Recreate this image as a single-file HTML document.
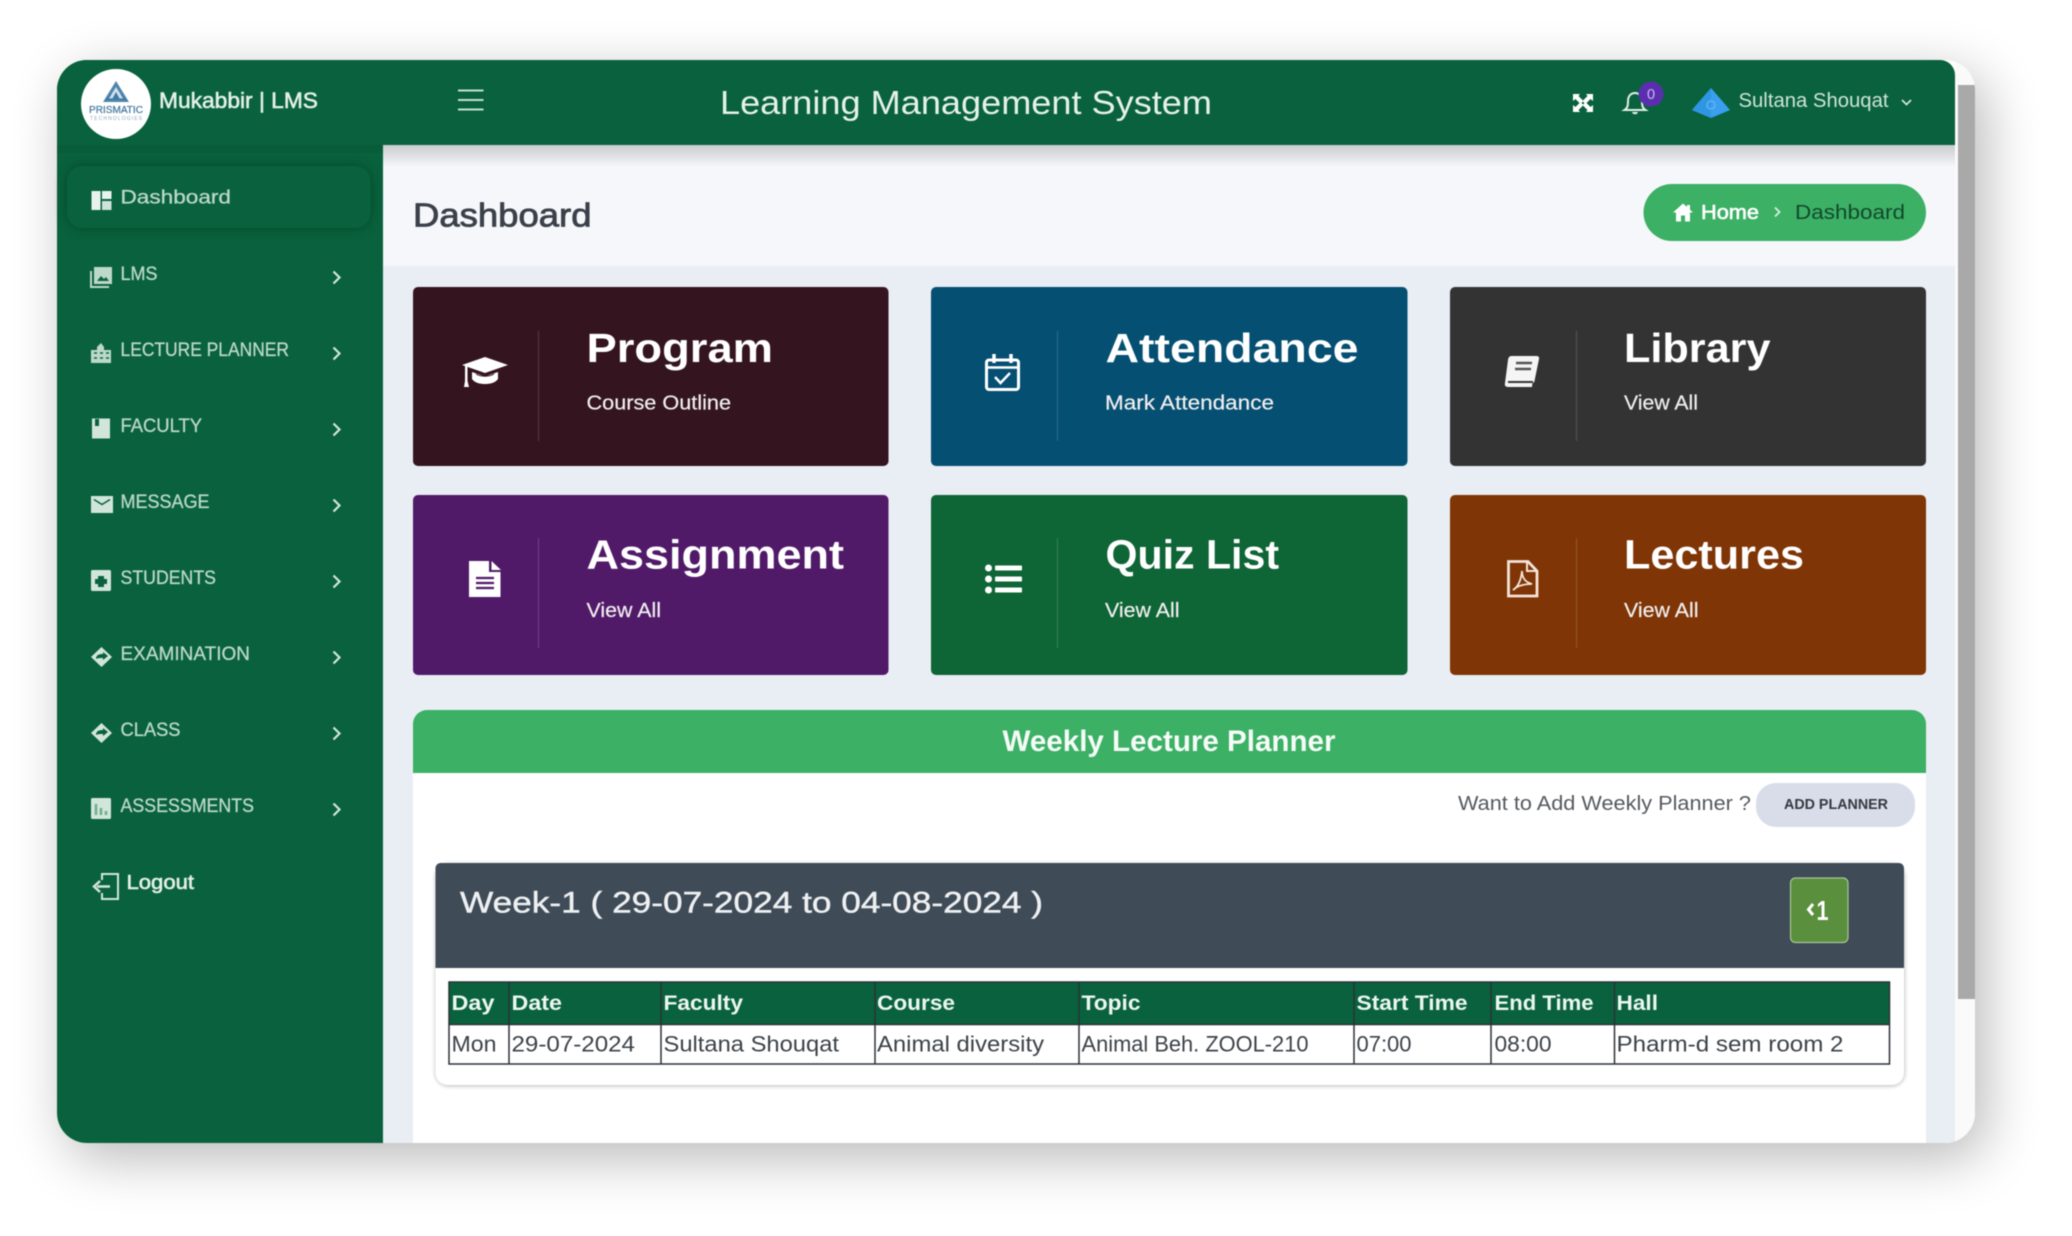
<!DOCTYPE html>
<html lang="en"><head><meta charset="utf-8"><title>Learning Management System</title>
<style>
html,body{margin:0;padding:0;background:#fff;width:2072px;height:1236px;overflow:hidden}
svg{display:block;filter:blur(.6px)}
text{font-family:"Liberation Sans",Arial,sans-serif;white-space:pre}
.m{stroke-width:.6}
</style></head><body>
<svg width="2072" height="1236" viewBox="0 0 2072 1236" xmlns="http://www.w3.org/2000/svg">
<defs>
<filter id="sh" x="-10%" y="-20%" width="120%" height="140%"><feGaussianBlur stdDeviation="28"/></filter>
<filter id="s6" x="-20%" y="-60%" width="140%" height="220%"><feGaussianBlur stdDeviation="6"/></filter>
<filter id="s2" x="-5%" y="-10%" width="110%" height="120%"><feGaussianBlur stdDeviation="2"/></filter>
<linearGradient id="hs" x1="0" y1="0" x2="0" y2="1"><stop offset="0" stop-color="#c9ccd0"/><stop offset="1" stop-color="#f5f7fa"/></linearGradient>
<clipPath id="win"><rect x="57" y="60" width="1918" height="1083" rx="30"/></clipPath>
<clipPath id="logo"><circle cx="116" cy="104" r="35"/></clipPath>
</defs>
<rect width="2072" height="1236" fill="#fff"/>
<rect x="67" y="75" width="1918" height="1083" rx="30" fill="#000" opacity=".28" filter="url(#sh)"/>
<g clip-path="url(#win)">
<rect x="57" y="60" width="1918" height="1083" fill="#fff"/>
<!-- scrollbar -->
<rect x="1955" y="60" width="20" height="1083" fill="#fafafa"/>
<rect x="1958" y="85" width="17" height="914" fill="#a9a9a9"/>
<!-- content bg -->
<rect x="383" y="145" width="1572" height="998" fill="#e9edf4" />
<rect x="383" y="145" width="1572" height="121" fill="#f5f7fa"/>
<rect x="383" y="145" width="1572" height="22" fill="url(#hs)"/>
<!-- sidebar -->
<rect x="57" y="60" width="326" height="1083" fill="#09623d"/>
<rect x="57" y="145" width="326" height="8" fill="#075535" opacity=".5"/>
<!-- header -->
<path d="M57 60H1940a15 15 0 0 1 15 15V145H57Z" fill="#09623d"/>
</g>
<!-- logo -->
<circle cx="116" cy="104" r="35" fill="#fff"/>
<g clip-path="url(#logo)">
<path d="M116 81l13 21h-26Z" fill="#4f86ad"/>
<path d="M116 87l7.500 12h-15Z" fill="#cfe0ea"/>
<path d="M116 92l3.500 6.500h-7Z" fill="#3f7aa5"/>
<path d="M106 101l5-7M126 101l-5-7M108 99h16" stroke="#3f7aa5" stroke-width="1.200" fill="none"/>
<text x="89" y="113" font-size="10" fill="#4f7fa3" stroke="#4f7fa3" stroke-width=".3" textLength="54" lengthAdjust="spacingAndGlyphs">PRISMATIC</text>
<text x="90" y="120" font-size="5" fill="#8aa8bc" textLength="52" lengthAdjust="spacing">TECHNOLOGIES</text>
</g>
<text x="159" y="108" font-size="22.500" fill="#e3efe8" stroke="#e3efe8" class="m" textLength="159" lengthAdjust="spacingAndGlyphs">Mukabbir | LMS</text>
<!-- hamburger -->
<path d="M458 90.500H483.500M458 100H483.500M458 109.500H483.500" stroke="#c4ddcf" stroke-width="2" fill="none"/>
<text x="720" y="114" font-size="33" fill="#e6f1ea" textLength="492" lengthAdjust="spacingAndGlyphs">Learning Management System</text>
<!-- fullscreen -->
<g fill="#fff"><path d="M1573 94h7l-1.500 2 5 5-3 3-5-5-2.500 2Z"/><path d="M1593 94h-7l1.500 2-5 5 3 3 5-5 2.500 2Z"/><path d="M1573 112h7l-1.500-2 5-5-3-3-5 5-2.500-2Z"/><path d="M1593 112h-7l1.500-2-5-5 3-3 5 5 2.500-2Z"/></g>
<!-- bell -->
<path d="M1624.500 110c3-2 3.500-4 3.500-9 0-5 3-8 7-8s7 3 7 8c0 5 .5 7 3.500 9Z" fill="none" stroke="#e3efe8" stroke-width="2"/>
<path d="M1632 112c.5 3 5.500 3 6 0Z" fill="#e3efe8"/>
<circle cx="1651" cy="94" r="12.500" fill="#5b2eb0"/>
<text x="1651" y="99" font-size="14.500" fill="#cdbcf0" text-anchor="middle">0</text>
<!-- avatar -->
<path d="M1711 88L1730 110L1711 118L1692 110Z" fill="#3a9fee"/>
<path d="M1711 88L1692 110L1711 118Z" fill="#2f96e4"/>
<circle cx="1711" cy="105" r="4" fill="none" stroke="#5db4f3" stroke-width="1.500"/>
<text x="1738.500" y="107" font-size="20" fill="#cfe3d8" textLength="150" lengthAdjust="spacingAndGlyphs">Sultana Shouqat</text>
<path d="M1902 100l4.500 4.500 4.500-4.500" fill="none" stroke="#cfe3d8" stroke-width="1.800"/>
<!-- page title -->
<text x="413" y="226.500" font-size="33" fill="#3b404a" stroke="#3b404a" stroke-width=".8" textLength="178.500" lengthAdjust="spacingAndGlyphs">Dashboard</text>
<rect x="1643.500" y="184" width="282.500" height="57" rx="28.500" fill="#3cb065"/>
<path d="M1683 203.500l-10 9h3v9h5v-6h4v6h5v-9h3l-3-2.700V205h-3v2Z" fill="#fff"/>
<text x="1701" y="219" font-size="20.500" fill="#fff" stroke="#fff" class="m" textLength="58" lengthAdjust="spacingAndGlyphs">Home</text>
<path d="M1775 207.500l4.500 4.500-4.500 4.500" fill="none" stroke="#d5f0df" stroke-width="1.800"/>
<text x="1795" y="219" font-size="20.500" fill="#11492b" textLength="110" lengthAdjust="spacingAndGlyphs">Dashboard</text>

<!-- sidebar active -->
<rect x="67" y="166" width="303.500" height="62" rx="15" fill="#03301c" opacity=".6" filter="url(#s6)"/>
<rect x="67" y="166" width="303.500" height="62" rx="15" fill="#09623d"/>
<g fill="#e9f3ee"><rect x="91.500" y="191" width="9" height="19"/><rect x="102" y="191" width="9.500" height="8"/><rect x="102" y="201" width="9.500" height="9" fill="#cfe3d8"/></g>
<g font-size="19.500" fill="#bcd8c9" stroke="#bcd8c9" stroke-width=".3">
<text x="120.500" y="203.500" textLength="110.500" lengthAdjust="spacingAndGlyphs">Dashboard</text>
<text x="120.500" y="280" textLength="37" lengthAdjust="spacingAndGlyphs">LMS</text>
<text x="120.500" y="356" textLength="168.500" lengthAdjust="spacingAndGlyphs">LECTURE PLANNER</text>
<text x="120.500" y="432" textLength="81.500" lengthAdjust="spacingAndGlyphs">FACULTY</text>
<text x="120.500" y="508" textLength="89" lengthAdjust="spacingAndGlyphs">MESSAGE</text>
<text x="120.500" y="584" textLength="95.500" lengthAdjust="spacingAndGlyphs">STUDENTS</text>
<text x="120.500" y="660" textLength="129.500" lengthAdjust="spacingAndGlyphs">EXAMINATION</text>
<text x="120.500" y="736" textLength="60" lengthAdjust="spacingAndGlyphs">CLASS</text>
<text x="120.500" y="812" textLength="133.500" lengthAdjust="spacingAndGlyphs">ASSESSMENTS</text>
</g>
<!-- LMS -->
<g><path d="M91 271v16h18" fill="none" stroke="#bcd8c9" stroke-width="2"/><rect x="94" y="267" width="18" height="17" fill="#bcd8c9"/><path d="M97 281l4-5 3 3 2-2 3 4Z" fill="#09623d"/></g>
<!-- lecture planner -->
<path d="M91 350h6v-3l4-4 3 4v3h7v13H91Z" fill="#bcd8c9"/><path d="M94 353h3M100 353h3M106 353h3M94 358h3M100 358h3M106 358h3" stroke="#09623d" stroke-width="1.500"/>
<!-- faculty -->
<rect x="92" y="418.500" width="18" height="20" fill="#d2e5da"/><rect x="95" y="419" width="4" height="7" fill="#09623d"/>
<!-- message -->
<rect x="91" y="496" width="22" height="17" fill="#d2e5da"/><path d="M94 499.500l8 5 8-5" fill="none" stroke="#09623d" stroke-width="1.500"/>
<!-- students -->
<rect x="91" y="570" width="20" height="21" rx="1.500" fill="#d2e5da"/><path d="M95 579h3v-3h6v3h3v5h-3v3h-6v-3h-3Z" fill="#09623d"/>
<!-- examination -->
<path d="M101.500 647l10.500 10-10.500 10-10.500-10Z" fill="#d2e5da"/><path d="M96 659c0-4 3-5 7-5v-2l5 4-5 4v-2c-3 0-5 0-7 1Z" fill="#09623d"/>
<!-- class -->
<path d="M101.500 723l10.500 10-10.500 10-10.500-10Z" fill="#d2e5da"/><path d="M96 735c0-4 3-5 7-5v-2l5 4-5 4v-2c-3 0-5 0-7 1Z" fill="#09623d"/>
<!-- assessments -->
<rect x="91" y="798" width="20" height="21" rx="1.500" fill="#d2e5da"/><path d="M96 804v11M101 808v7M106 811v4" stroke="#6fae8b" stroke-width="2.500"/>
<!-- logout -->
<path d="M102 880v-6h16v25h-16v-6" fill="none" stroke="#d2e5da" stroke-width="2"/><path d="M110 886.500H97M100 881l-6 5.500 6 5.500" fill="none" stroke="#d2e5da" stroke-width="2.500"/>
<text x="126.500" y="889" font-size="20.500" fill="#e3efe8" stroke="#e3efe8" class="m" textLength="67.500" lengthAdjust="spacingAndGlyphs">Logout</text>
<!-- chevrons -->
<g fill="none" stroke="#d2e5da" stroke-width="2.200"><path d="M333.500 271.500l6 6-6 6"/><path d="M333.500 347.500l6 6-6 6"/><path d="M333.500 423.500l6 6-6 6"/><path d="M333.500 499.500l6 6-6 6"/><path d="M333.500 575.500l6 6-6 6"/><path d="M333.500 651.500l6 6-6 6"/><path d="M333.500 727.500l6 6-6 6"/><path d="M333.500 803.500l6 6-6 6"/></g>

<!-- cards -->
<g>
<rect x="413" y="287" width="475.500" height="179" rx="5" fill="#34141f"/>
<rect x="931" y="287" width="476.500" height="179" rx="5" fill="#054f72"/>
<rect x="1450" y="287" width="476" height="179" rx="5" fill="#333333"/>
<rect x="413" y="495" width="475.500" height="180" rx="5" fill="#511a69"/>
<rect x="931" y="495" width="476.500" height="180" rx="5" fill="#0e6535"/>
<rect x="1450" y="495" width="476" height="180" rx="5" fill="#7f3505"/>
</g>
<g stroke="#fff" stroke-opacity=".15" stroke-width="1.200">
<path d="M538.500 331V441M1057.500 331V441M1576.500 331V441M538.500 538V648M1057.500 538V648M1576.500 538V648"/>
</g>
<g fill="#fff" font-size="41" font-weight="bold">
<text x="586.500" y="362" textLength="186.500" lengthAdjust="spacingAndGlyphs">Program</text>
<text x="1105.500" y="362" textLength="253" lengthAdjust="spacingAndGlyphs">Attendance</text>
<text x="1624" y="362" textLength="146.500" lengthAdjust="spacingAndGlyphs">Library</text>
<text x="586.500" y="568.500" textLength="257.500" lengthAdjust="spacingAndGlyphs">Assignment</text>
<text x="1105.500" y="568.500" textLength="173.500" lengthAdjust="spacingAndGlyphs">Quiz List</text>
<text x="1624" y="568.500" textLength="180" lengthAdjust="spacingAndGlyphs">Lectures</text>
</g>
<g font-size="20" fill="#f0eff0" stroke="#f0eff0" stroke-width=".2">
<text x="586.500" y="409.500" textLength="144.500" lengthAdjust="spacingAndGlyphs">Course Outline</text>
<text x="1105" y="409.500" textLength="169" lengthAdjust="spacingAndGlyphs">Mark Attendance</text>
<text x="1624" y="409.500" textLength="74" lengthAdjust="spacingAndGlyphs">View All</text>
<text x="586.500" y="617" textLength="74.500" lengthAdjust="spacingAndGlyphs">View All</text>
<text x="1105" y="617" textLength="74.500" lengthAdjust="spacingAndGlyphs">View All</text>
<text x="1624" y="617" textLength="74.500" lengthAdjust="spacingAndGlyphs">View All</text>
</g>
<!-- cap icon -->
<g fill="#fff"><path d="M485 357l23 8-23 8-23-8Z"/><path d="M472 372l13 4.500 13-4.500v7c-3 4-8 5-13 5s-10-1-13-5Z"/><path d="M465 366h2.500v15l1.500 6h-5l1-6Z"/></g>
<path d="M476 374c5 3 13 3 18 0" stroke="#34141f" stroke-width="1" fill="none"/>
<!-- calendar -->
<g fill="none" stroke="#fff" stroke-width="3"><rect x="986.500" y="360" width="32" height="29.500" rx="2.500"/><path d="M994 354v9M1011 354v9" stroke-width="3.500"/><path d="M986.500 367.500h32" stroke-width="2.500"/><path d="M995 377l5.500 6 9.500-10" stroke-width="2.500"/></g>
<!-- book -->
<path d="M1511 356h25c2.500 0 3.500 1 3 3l-4.500 22c-.3 1.500-1 2-2 2l-.5 4h-24c-3 0-3.500-2-3-4l3-23c.3-2.500 1.500-4 3.500-4Z" fill="#f5f5f5"/>
<path d="M1508 382h25" stroke="#333" stroke-width="2"/><path d="M1516 363h16M1515 369h16" stroke="#555" stroke-width="2.500"/>
<!-- doc -->
<path d="M469 561h20v11h11.500v25H469Z" fill="#fff"/><path d="M491.500 561l9.500 9h-9.500Z" fill="#fff"/>
<path d="M476 578h18M476 583h18M476 588h18" stroke="#511a69" stroke-width="2.200"/>
<!-- list -->
<g fill="#fff"><circle cx="988.500" cy="568" r="3.500"/><circle cx="988.500" cy="579" r="3.500"/><circle cx="988.500" cy="590" r="3.500"/><rect x="995" y="565.500" width="27" height="5" rx="1"/><rect x="995" y="576.500" width="27" height="5" rx="1"/><rect x="995" y="587.500" width="27" height="5" rx="1"/></g>
<!-- pdf -->
<g fill="none" stroke="#f3e4da" stroke-width="2.800"><path d="M1508.500 561.500H1528l9 9.500V596h-28.500Z"/><path d="M1527 561.500V571h9.500" stroke-width="2"/><path d="M1513 590c5-3 8-10 9-19 0 5 2 11 10 13-6 0-14 1-19 6Z" stroke-width="1.800"/></g>

<!-- weekly -->
<path d="M413 773V724a14 14 0 0 1 14-14H1912a14 14 0 0 1 14 14V773Z" fill="#3cb065"/>
<rect x="413" y="773" width="1513" height="370" fill="#fff"/>
<text x="1002.500" y="751" font-size="29.500" font-weight="bold" fill="#f6fbf8" textLength="333" lengthAdjust="spacingAndGlyphs">Weekly Lecture Planner</text>
<text x="1458" y="810" font-size="20.500" fill="#555a5f" textLength="293" lengthAdjust="spacingAndGlyphs">Want to Add Weekly Planner ?</text>
<rect x="1756" y="783" width="159" height="44" rx="20" fill="#d8dde9"/>
<text x="1784" y="809" font-size="15" font-weight="bold" fill="#343a40" textLength="104" lengthAdjust="spacingAndGlyphs">ADD PLANNER</text>

<!-- week card -->
<rect x="435.500" y="864" width="1469" height="222" rx="13" fill="#000" opacity=".28" filter="url(#s2)"/>
<rect x="435.500" y="863" width="1468.500" height="222" rx="12" fill="#fff"/>
<path d="M435.500 968V868a5 5 0 0 1 5-5H1899a5 5 0 0 1 5 5V968Z" fill="#3f4b57"/>
<text x="460" y="912.500" font-size="30" fill="#eef0f2" stroke="#eef0f2" stroke-width=".45" textLength="583" lengthAdjust="spacingAndGlyphs">Week-1 ( 29-07-2024 to 04-08-2024 )</text>
<rect x="1790.500" y="878" width="57.500" height="64.500" rx="5" fill="#5a8f3d" stroke="#a9c698" stroke-width="1.200"/>
<path d="M1813 904l-4.500 5.500 4.500 5.500" fill="none" stroke="#fff" stroke-width="3"/>
<text x="1816.500" y="920" font-size="28" font-weight="bold" fill="#fff" textLength="12" lengthAdjust="spacingAndGlyphs">1</text>

<!-- table -->
<rect x="449" y="982" width="1440.500" height="42" fill="#09623d"/>
<rect x="449" y="1024" width="1440.500" height="40" fill="#fff"/>
<g stroke="#2c3238" stroke-width="1.500" fill="none">
<rect x="449" y="982" width="1440.500" height="82"/>
<path d="M449 1024.500H1889.500M509 982V1064M661 982V1064M875 982V1064M1079 982V1064M1354 982V1064M1491 982V1064M1614.500 982V1064"/>
</g>
<g font-size="21.500" font-weight="bold" fill="#edf6f1">
<text x="451.500" y="1010" textLength="43" lengthAdjust="spacingAndGlyphs">Day</text>
<text x="511.500" y="1010" textLength="50.500" lengthAdjust="spacingAndGlyphs">Date</text>
<text x="663.500" y="1010" textLength="79.500" lengthAdjust="spacingAndGlyphs">Faculty</text>
<text x="877" y="1010" textLength="78" lengthAdjust="spacingAndGlyphs">Course</text>
<text x="1081.500" y="1010" textLength="59" lengthAdjust="spacingAndGlyphs">Topic</text>
<text x="1356.500" y="1010" textLength="111" lengthAdjust="spacingAndGlyphs">Start Time</text>
<text x="1494.500" y="1010" textLength="99" lengthAdjust="spacingAndGlyphs">End Time</text>
<text x="1616.500" y="1010" textLength="41.500" lengthAdjust="spacingAndGlyphs">Hall</text>
</g>
<g font-size="22" fill="#3c4248">
<text x="451.500" y="1051.500" textLength="45" lengthAdjust="spacingAndGlyphs">Mon</text>
<text x="511.500" y="1051.500" textLength="123.500" lengthAdjust="spacingAndGlyphs">29-07-2024</text>
<text x="663.500" y="1051.500" textLength="175.500" lengthAdjust="spacingAndGlyphs">Sultana Shouqat</text>
<text x="877" y="1051.500" textLength="167" lengthAdjust="spacingAndGlyphs">Animal diversity</text>
<text x="1081.500" y="1051.500" textLength="227" lengthAdjust="spacingAndGlyphs">Animal Beh. ZOOL-210</text>
<text x="1356.500" y="1051.500" textLength="55" lengthAdjust="spacingAndGlyphs">07:00</text>
<text x="1494.500" y="1051.500" textLength="57" lengthAdjust="spacingAndGlyphs">08:00</text>
<text x="1616.500" y="1051.500" textLength="227" lengthAdjust="spacingAndGlyphs">Pharm-d sem room 2</text>
</g>
</svg>
</body></html>
